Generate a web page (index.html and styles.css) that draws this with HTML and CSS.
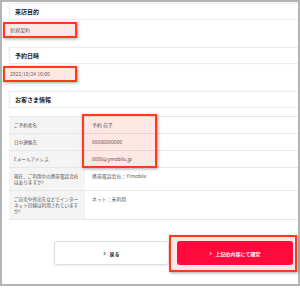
FILE: index.html
```html
<!DOCTYPE html>
<html lang="ja">
<head>
    <meta charset="UTF-8">
    <meta name="viewport" content="width=device-width, initial-scale=1.0">
    <title>ご予約内容の確認</title>
    <link rel="stylesheet" href="styles.css">
</head>
<body>
    <div class="frame">
        <div class="sec-head">来店目的</div>
        <div class="sec-body">
            <div class="mark">新規契約</div>
        </div>

        <div class="sec-head">予約日時</div>
        <div class="sec-body">
            <div class="mark">2022/10/24 10:00</div>
        </div>

        <div class="sec-head">お客さま情報</div>
        <div class="table-wrap">
            <table class="info">
                <tr>
                    <th>ご予約者名</th>
                    <td>予約 花子</td>
                </tr>
                <tr>
                    <th>日中連絡先</th>
                    <td>08000000000</td>
                </tr>
                <tr>
                    <th>Eメールアドレス</th>
                    <td>0000@ymobile.jp</td>
                </tr>
                <tr>
                    <th>現在、ご利用中の携帯電話会社はありますか?</th>
                    <td>携帯電話会社：Y!mobile</td>
                </tr>
                <tr>
                    <th>ご自宅や外出先などでインターネット回線は利用されていますか?</th>
                    <td>ネット：未利用</td>
                </tr>
            </table>
            <div class="mark-over mark-table"></div>
        </div>

        <div class="actions">
            <div class="mark-over mark-btn"></div>
            <button class="btn btn-back">
                <svg class="chev" viewBox="0 0 4 6"><polyline points="1,1 3,3 1,5"/></svg>戻る
            </button>
            <button class="btn btn-ok">
                <svg class="chev" viewBox="0 0 4 6"><polyline points="1,1 3,3 1,5"/></svg>上記の内容にて確定
            </button>
        </div>
    </div>
</body>
</html>
```

FILE: styles.css
```css
body {
    margin: 0;
    background-color: #fff;
    font-family: "Noto Sans CJK JP", "Noto Sans", sans-serif;
    color: #444;
}
.frame {
    box-sizing: border-box;
    width: 300px;
    height: 286px;
    border: 2px solid #b4b4b4;
    padding: 1px 0 0 7px;
    background-color: #fff;
}
.sec-head {
    box-sizing: border-box;
    height: 17px;
    border: 1px solid #ececec;
    border-right: none;
    padding-left: 5px;
    font-size: 6px;
    line-height: 15px;
    font-weight: bold;
    color: #222;
    box-shadow: -1px 0 2px rgba(0, 0, 0, 0.04);
}
.sec-body {
    height: 27px;
    margin-left: -6px;
    padding-top: 2px;
    box-sizing: border-box;
}
.mark {
    box-sizing: border-box;
    width: 74px;
    height: 16px;
    padding-left: 5px;
    border: 2px solid #ff3a1c;
    background-color: #fde8e5;
    box-shadow: 1px 1px 3px rgba(0, 0, 0, 0.35);
    font-size: 5px;
    line-height: 12px;
    color: #666;
}
.table-wrap {
    position: relative;
    margin-top: 8px;
}
.info {
    width: 100%;
    border-collapse: collapse;
    border-top: 1px solid #e8e8e8;
    font-size: 4.6px;
    line-height: 6px;
}
.info th,
.info td {
    padding: 5px 5px;
    border-bottom: 1px solid #e8e8e8;
    vertical-align: top;
    text-align: left;
    font-weight: normal;
}
.info th {
    box-sizing: border-box;
    width: 76px;
    background-color: #f4f4f4;
    color: #555;
}
.info td {
    padding-left: 7px;
    color: #555;
    font-size: 4.9px;
}
.mark-over {
    position: absolute;
    box-sizing: border-box;
    border: 2px solid #ff3a1c;
    box-shadow: 1px 1px 3px rgba(0, 0, 0, 0.35);
}
.mark-table {
    left: 73px;
    top: -2px;
    width: 75px;
    height: 54px;
    background-color: rgba(250, 60, 40, 0.12);
}
.actions {
    position: relative;
    display: flex;
    justify-content: flex-end;
    gap: 8px;
    margin-top: 21px;
    padding-right: 5px;
}
.mark-btn {
    left: 160px;
    top: -6px;
    width: 128px;
    height: 37px;
    background-color: #fde8e5;
}
.btn {
    position: relative;
    display: flex;
    align-items: center;
    justify-content: center;
    gap: 3px;
    width: 115px;
    height: 24px;
    border-radius: 3px;
    font-family: inherit;
    font-size: 5px;
    font-weight: bold;
    padding: 0;
    cursor: pointer;
}
.btn-back {
    background-color: #fff;
    border: 1px solid #dcdcdc;
    color: #333;
    box-shadow: 0 1px 2px rgba(0, 0, 0, 0.08);
}
.btn-ok {
    width: 116px;
    background-color: #ff0a3c;
    border: none;
    color: #fff;
}
.chev {
    width: 3px;
    height: 5px;
    fill: none;
    stroke: currentColor;
    stroke-width: 1.2;
}
```
